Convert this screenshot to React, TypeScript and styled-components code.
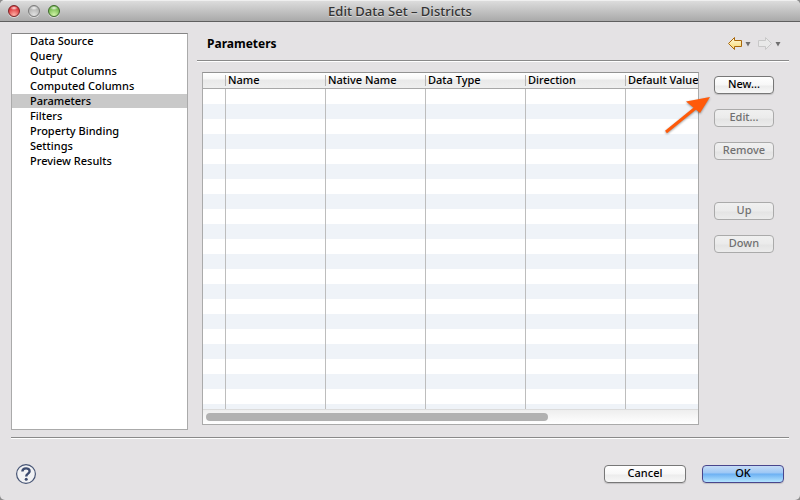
import React, { useState } from "react";
import styled, { createGlobalStyle, css } from "styled-components";

const GlobalStyle = createGlobalStyle`
  * { box-sizing: border-box; }
  body {
    margin: 0;
    background: #8c8c8c;
    color: #000;
    font: 500 11px/15px "Lucida Grande", "Noto Sans", sans-serif;
  }
  button { font: inherit; }
`;

const Window = styled.div`
  display: flex;
  flex-direction: column;
  height: 100vh;
  min-height: 320px;
  overflow: hidden;
  border-radius: 5px;
  background: #e4e2e4;
`;

const TitleBar = styled.header`
  position: relative;
  display: flex;
  flex: none;
  align-items: center;
  justify-content: center;
  height: 22px;
  border-top: 1px solid #efefef;
  border-bottom: 1px solid #5f5f5f;
  background: linear-gradient(#dcdcdc, #a9a9a9);
`;

const WindowTitle = styled.h1`
  margin: 0;
  color: #333;
  font-size: 13px;
  font-weight: 500;
  line-height: 20px;
  text-shadow: 0 1px 0 rgba(255, 255, 255, 0.5);
`;

const Lights = styled.div`
  position: absolute;
  left: 8px;
  top: 4px;
  display: flex;
  gap: 8px;
`;

const tones = {
  close: { edge: "#7d2427", deep: "#d92b30", glow: "#ffb3a8" },
  minimize: { edge: "#7c7c7c", deep: "#b0b0b0", glow: "#e2e2e2" },
  zoom: { edge: "#3d6a2a", deep: "#6fb549", glow: "#d2f5a8" },
};

const Light = styled.button<{ $tone: keyof typeof tones }>`
  width: 12px;
  height: 12px;
  padding: 0;
  border: 1px solid ${(p) => tones[p.$tone].edge};
  border-radius: 50%;
  background: radial-gradient(ellipse 4px 2px at 50% 20%, rgba(255, 255, 255, 0.9), transparent),
    radial-gradient(circle at 50% 90%, ${(p) => tones[p.$tone].glow}, ${(p) => tones[p.$tone].deep} 75%);
  box-shadow: 0 1px 0 rgba(255, 255, 255, 0.5);
`;

const Content = styled.div`
  display: flex;
  flex: 1;
  min-height: 0;
  gap: 9px;
  padding: 11px 11px 7px;
`;

const Sidebar = styled.nav`
  flex: none;
  width: 177px;
  border: 1px solid #aaa;
  border-top-color: #858585;
  background: #fff;
`;

const PageList = styled.ul`
  margin: 0;
  padding: 0;
  list-style: none;
`;

const PageLink = styled.a`
  display: block;
  height: 15px;
  padding-left: 18px;
  color: #000;
  line-height: 13px;
  text-decoration: none;
  &[aria-current="page"] {
    background: linear-gradient(#c9c9c9 14px, #fff 14px);
  }
`;

const Main = styled.main`
  display: flex;
  flex: 1;
  flex-direction: column;
  min-width: 0;
`;

const PageHeader = styled.div`
  display: flex;
  flex: none;
  align-items: center;
  justify-content: space-between;
  height: 29px;
  padding: 0 4px 7px 10px;
  border-bottom: 1px solid #fff;
  box-shadow: inset 0 -1px 0 #8a8a8a;
`;

const Heading = styled.h2`
  margin: 0;
  font-size: 12px;
  font-weight: 700;
  line-height: 20px;
`;

const History = styled.div`
  display: flex;
  gap: 2px;
`;

const HistoryButton = styled.button`
  display: flex;
  padding: 0;
  border: 0;
  background: none;
`;

const Workspace = styled.div`
  display: flex;
  flex: 1;
  min-height: 0;
  gap: 15px;
  padding: 10px 15px 5px 5px;
`;

const TablePane = styled.div`
  display: flex;
  flex: 1;
  flex-direction: column;
  min-width: 0;
  border: 1px solid #aaa;
  border-top-color: #929292;
  background: #fff;
`;

const TableClip = styled.div`
  flex: 1;
  min-height: 0;
  overflow: hidden;
`;

const Table = styled.table`
  width: 723px;
  table-layout: fixed;
  border-collapse: separate;
  border-spacing: 0;
`;

const MarkerCol = styled.col`
  width: 23px;
`;

const HeadCell = styled.th`
  height: 16px;
  padding: 0;
  border-bottom: 1px solid #a8a8a8;
  background: linear-gradient(#fff 0, #f7f7f7 6px, #e9e9e9 7px, #efefef 100%);
  font-weight: 500;
  text-align: left;
`;

const HeadLabel = styled.span`
  display: block;
  height: 11px;
  padding-left: 2px;
  border-right: 1px solid #b5b5b5;
  line-height: 9px;
  white-space: nowrap;
`;

const Cell = styled.td`
  height: 15px;
  padding: 0;
  border-right: 1px solid #bdbdbd;
`;

const Row = styled.tr`
  &:nth-child(even) {
    background: #eff3f8;
  }
`;

const ScrollTrack = styled.div`
  flex: none;
  height: 15px;
  padding: 3px;
  border-top: 1px solid #dcdcdc;
  background: linear-gradient(#eee, #fff);
`;

const ScrollThumb = styled.div`
  width: 70%;
  height: 8px;
  border-radius: 4px;
  background: #b1b1b1;
`;

const Actions = styled.div`
  position: relative;
  display: flex;
  flex: none;
  flex-direction: column;
  gap: 15px;
  width: 60px;
  padding-top: 4px;
`;

const ActionGroup = styled.div`
  display: flex;
  flex-direction: column;
  gap: 15px;
  & + & {
    margin-top: 27px;
  }
`;

const PushButton = styled.button<{ $variant?: "default" }>`
  height: 18px;
  padding: 0 0 2px;
  border: 1px solid #777;
  border-radius: 4px;
  background: linear-gradient(#fff 0, #f7f7f7 8px, #ececec 9px, #f7f7f7 100%);
  box-shadow: 0 1px 1px rgba(0, 0, 0, 0.15);
  color: #000;
  line-height: 14px;
  &:disabled {
    border-color: #aaa;
    background: linear-gradient(#f0f0f0 0, #ebebeb 8px, #e4e4e4 9px, #ececec 100%);
    box-shadow: none;
    color: #707070;
  }
  ${(p) =>
    p.$variant === "default" &&
    css`
      border-color: #49468c;
      background: linear-gradient(#c5dcf6 0, #9cc7f5 7px, #6cb0f3 8px, #b4e4ff 100%);
    `}
`;

const Pointer = styled.svg`
  position: absolute;
  left: -52px;
  top: 20px;
  filter: drop-shadow(0 1px 1px rgba(0, 0, 0, 0.4));
  pointer-events: none;
`;

const Footer = styled.footer`
  display: flex;
  flex: none;
  align-items: center;
  justify-content: space-between;
  height: 63px;
  margin: 0 11px;
  padding: 10px 5px 0 4px;
  border-top: 1px solid #8a8a8a;
  box-shadow: inset 0 1px 0 #fff;
`;

const HelpButton = styled.button`
  display: flex;
  padding: 0;
  border: 0;
  background: none;
`;

const FooterActions = styled.div`
  display: grid;
  grid-template-columns: 82px 82px;
  gap: 16px;
`;

const PAGES = [
  "Data Source",
  "Query",
  "Output Columns",
  "Computed Columns",
  "Parameters",
  "Filters",
  "Property Binding",
  "Settings",
  "Preview Results",
];

const COLUMNS = ["Name", "Native Name", "Data Type", "Direction", "Default Value", "", ""];

const ROWS = Array.from({ length: 80 }, (_, i) => i);

function HistoryIcon({ back }: { back?: boolean }) {
  const d = back
    ? "M1.5 7.5 L7.5 1.5 V4.5 H14.5 V10.5 H7.5 V13.5 Z"
    : "M14.5 7.5 L8.5 1.5 V4.5 H1.5 V10.5 H8.5 V13.5 Z";
  return (
    <svg width="28" height="15" viewBox="0 0 28 15" aria-hidden="true">
      <defs>
        <linearGradient id="gold" x1="0" y1="0" x2="0" y2="1">
          <stop offset="0" stopColor="#fffbe0" />
          <stop offset="1" stopColor="#f8d667" />
        </linearGradient>
      </defs>
      <path d={d} fill={back ? "url(#gold)" : "#e9e9e9"} stroke={back ? "#a9680c" : "#c8c8c8"} />
      <path d="M18.5 6 H23.5 L21 10.5 Z" fill="#6f6f6f" />
    </svg>
  );
}

export default function App() {
  const [page, setPage] = useState("Parameters");

  return (
    <>
      <GlobalStyle />
      <Window>
        <TitleBar>
          <Lights>
            <Light $tone="close" aria-label="Close" />
            <Light $tone="minimize" aria-label="Minimize" />
            <Light $tone="zoom" aria-label="Zoom" />
          </Lights>
          <WindowTitle>Edit Data Set – Districts</WindowTitle>
        </TitleBar>

        <Content>
          <Sidebar aria-label="Pages">
            <PageList>
              {PAGES.map((name) => (
                <li key={name}>
                  <PageLink
                    href="#"
                    aria-current={name === page ? "page" : undefined}
                    onClick={(e) => {
                      e.preventDefault();
                      setPage(name);
                    }}
                  >
                    {name}
                  </PageLink>
                </li>
              ))}
            </PageList>
          </Sidebar>

          <Main>
            <PageHeader>
              <Heading>{page}</Heading>
              <History>
                <HistoryButton aria-label="Back">
                  <HistoryIcon back />
                </HistoryButton>
                <HistoryButton aria-label="Forward">
                  <HistoryIcon />
                </HistoryButton>
              </History>
            </PageHeader>

            <Workspace>
              <TablePane>
                <TableClip>
                  <Table aria-label="Parameters">
                    <colgroup>
                      <MarkerCol />
                      {COLUMNS.map((_, i) => (
                        <col key={i} />
                      ))}
                    </colgroup>
                    <thead>
                      <tr>
                        <HeadCell>
                          <HeadLabel />
                        </HeadCell>
                        {COLUMNS.map((name, i) => (
                          <HeadCell key={i} scope="col">
                            <HeadLabel>{name}</HeadLabel>
                          </HeadCell>
                        ))}
                      </tr>
                    </thead>
                    <tbody>
                      {ROWS.map((row) => (
                        <Row key={row}>
                          <Cell />
                          {COLUMNS.map((_, i) => (
                            <Cell key={i} />
                          ))}
                        </Row>
                      ))}
                    </tbody>
                  </Table>
                </TableClip>
                <ScrollTrack>
                  <ScrollThumb />
                </ScrollTrack>
              </TablePane>

              <Actions>
                <ActionGroup>
                  <PushButton>New...</PushButton>
                  <PushButton disabled>Edit...</PushButton>
                  <PushButton disabled>Remove</PushButton>
                </ActionGroup>
                <ActionGroup>
                  <PushButton disabled>Up</PushButton>
                  <PushButton disabled>Down</PushButton>
                </ActionGroup>
                <Pointer width="52" height="46" viewBox="0 0 52 46" aria-hidden="true">
                  <path d="M4 40 L36 14" stroke="#ff5a0a" strokeWidth="3" />
                  <path d="M48 5 L24 9.5 L38 21 Z" fill="#ff5a0a" />
                </Pointer>
              </Actions>
            </Workspace>
          </Main>
        </Content>

        <Footer>
          <HelpButton aria-label="Help">
            <svg width="22" height="22" viewBox="0 0 22 22" aria-hidden="true">
              <circle cx="11" cy="11" r="9.4" fill="#f1f2f4" stroke="#475575" strokeWidth="1.2" />
              <path
                d="M7.4 8.6 C7.4 4.4 14.6 4.4 14.6 8.2 C14.6 10.7 11.2 10.6 11.2 13.6"
                fill="none"
                stroke="#3d4c70"
                strokeWidth="2.4"
              />
              <circle cx="11.2" cy="16.3" r="1.5" fill="#3d4c70" />
            </svg>
          </HelpButton>
          <FooterActions>
            <PushButton>Cancel</PushButton>
            <PushButton $variant="default">OK</PushButton>
          </FooterActions>
        </Footer>
      </Window>
    </>
  );
}
